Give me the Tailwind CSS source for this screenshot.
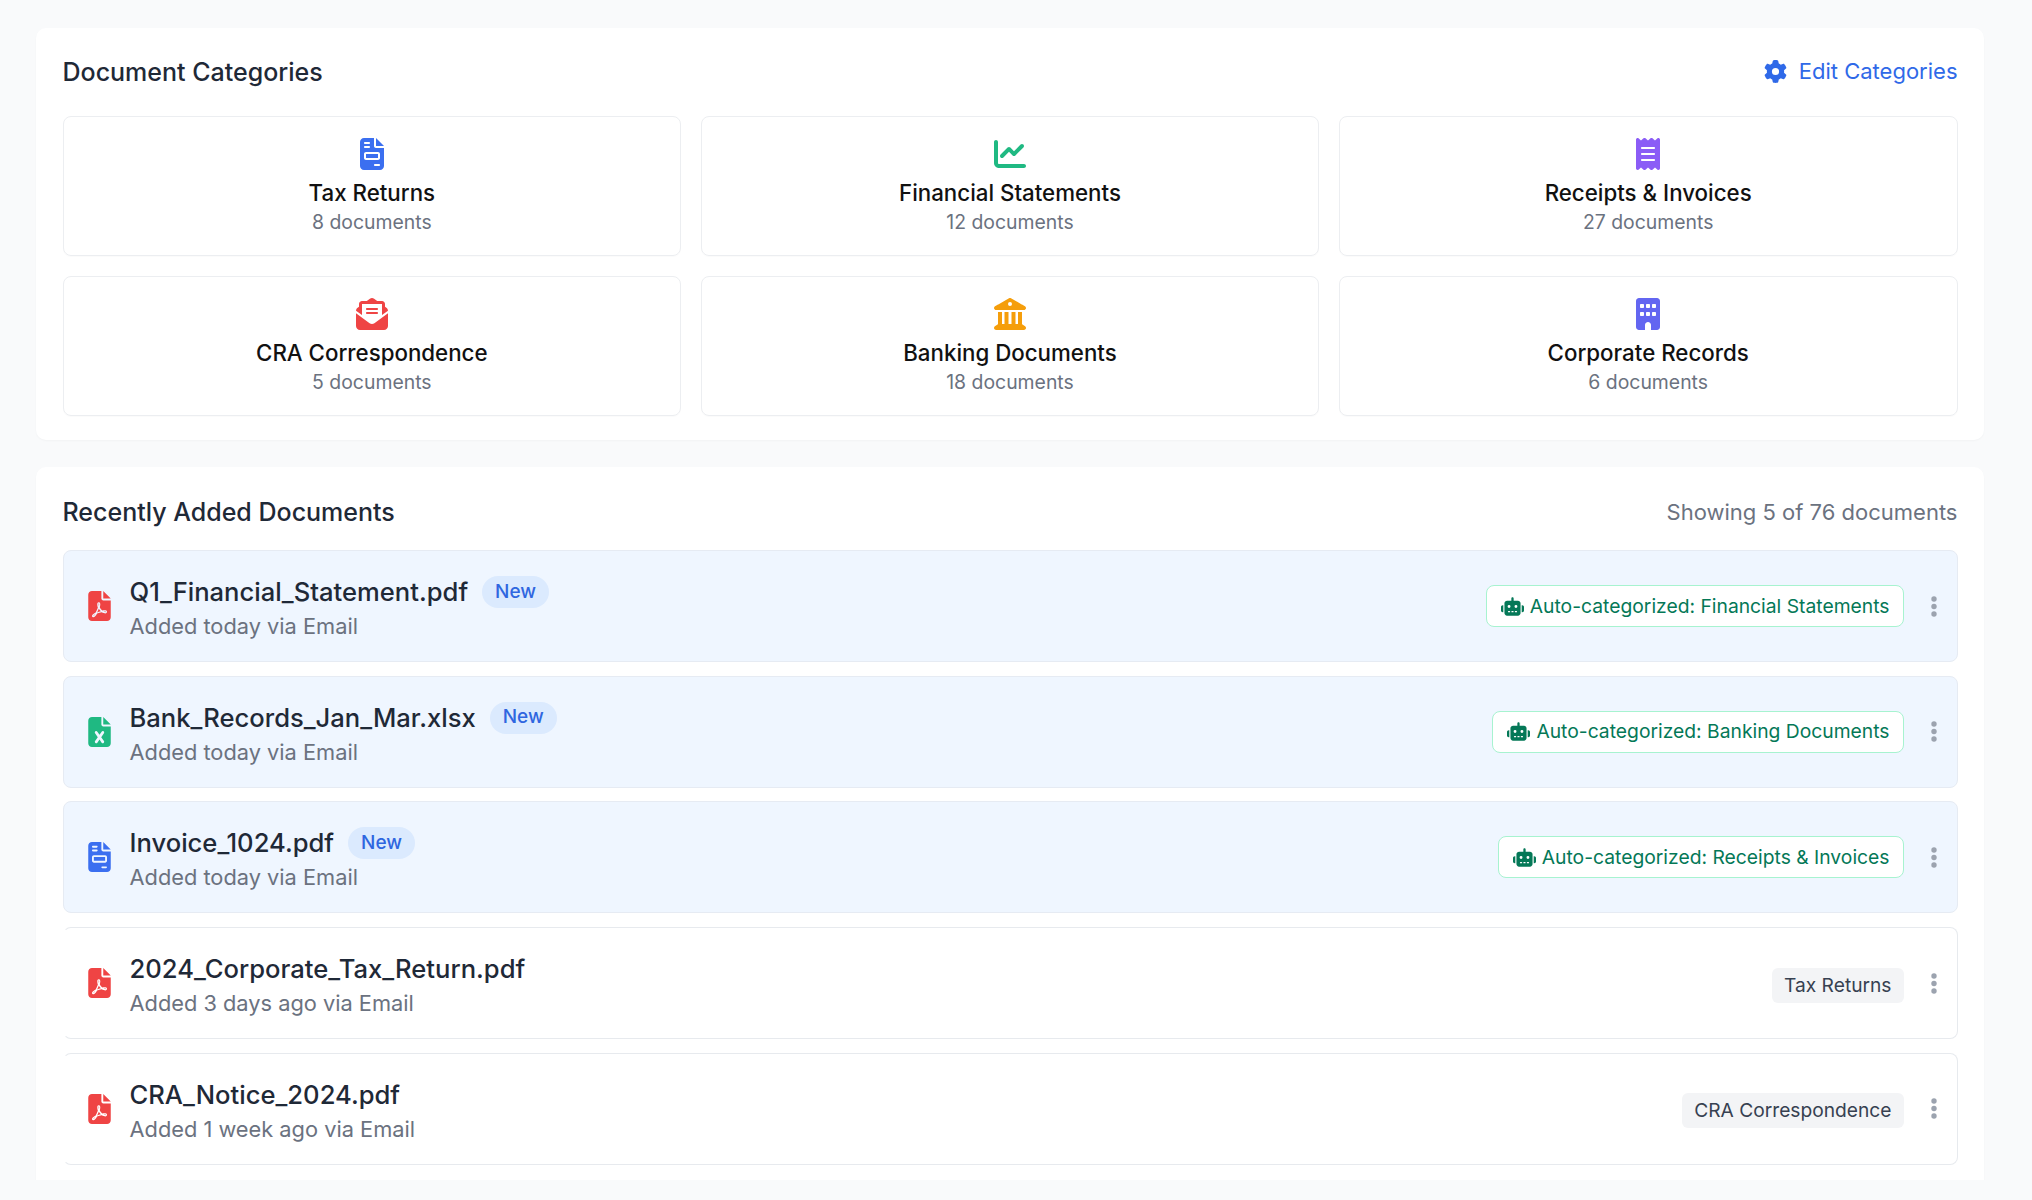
<!DOCTYPE html>
<html lang="en">
<head>
    <meta charset="UTF-8">
    <title>Documents</title>
    <script src="https://cdn.jsdelivr.net/npm/@tailwindcss/browser@4"></script>
</head>
<body class="bg-[#f9fafb] font-['Inter',sans-serif] antialiased">
    <!-- icon sprite -->
    <svg class="hidden" xmlns="http://www.w3.org/2000/svg">
        <symbol id="i-invoice" viewBox="0 0 384 512"><path d="M64 0C28.7 0 0 28.7 0 64V448c0 35.3 28.7 64 64 64H320c35.3 0 64-28.7 64-64V160H256c-17.7 0-32-14.3-32-32V0H64zM256 0V128H384L256 0zM80 64h64c8.8 0 16 7.2 16 16s-7.2 16-16 16H80c-8.8 0-16-7.2-16-16s7.2-16 16-16zm0 64h64c8.8 0 16 7.2 16 16s-7.2 16-16 16H80c-8.8 0-16-7.2-16-16s7.2-16 16-16zm16 96H288c17.7 0 32 14.3 32 32v64c0 17.7-14.3 32-32 32H96c-17.7 0-32-14.3-32-32V256c0-17.7 14.3-32 32-32zm0 32v64H288V256H96zM240 416h64c8.8 0 16 7.2 16 16s-7.2 16-16 16H240c-8.8 0-16-7.2-16-16s7.2-16 16-16z"/></symbol>
        <symbol id="i-chart" viewBox="0 0 512 512"><path d="M64 64c0-17.7-14.3-32-32-32S0 46.3 0 64V400c0 44.2 35.8 80 80 80H480c17.7 0 32-14.3 32-32s-14.3-32-32-32H80c-8.8 0-16-7.2-16-16V64zm406.6 86.6c12.5-12.5 12.5-32.8 0-45.3s-32.8-12.5-45.3 0L320 210.7l-57.4-57.4c-12.5-12.5-32.8-12.5-45.3 0l-112 112c-12.5 12.5-12.5 32.8 0 45.3s32.8 12.5 45.3 0L240 221.3l57.4 57.4c12.5 12.5 32.8 12.5 45.3 0l128-128z"/></symbol>
        <symbol id="i-receipt" viewBox="0 0 384 512"><path d="M14 2.2C22.5-1.7 32.5-.3 39.6 5.8L80 40.4 120.4 5.8c9-7.7 22.3-7.7 31.2 0L192 40.4 232.4 5.8c9-7.7 22.2-7.7 31.2 0L304 40.4 344.4 5.8c7.1-6.1 17.1-7.5 25.6-3.6s14 12.4 14 21.8V488c0 9.4-5.5 17.9-14 21.8s-18.5 2.5-25.6-3.6L304 471.6l-40.4 34.6c-9 7.7-22.3 7.7-31.2 0L192 471.6l-40.4 34.6c-9 7.7-22.2 7.7-31.2 0L80 471.6 39.6 506.2c-7.1 6.1-17.1 7.5-25.6 3.6S0 497.4 0 488V24C0 14.6 5.5 6.1 14 2.2zM96 144c-8.8 0-16 7.2-16 16s7.2 16 16 16H288c8.8 0 16-7.2 16-16s-7.2-16-16-16H96zM80 352c0 8.8 7.2 16 16 16H288c8.8 0 16-7.2 16-16s-7.2-16-16-16H96c-8.8 0-16 7.2-16 16zM96 240c-8.8 0-16 7.2-16 16s7.2 16 16 16H288c8.8 0 16-7.2 16-16s-7.2-16-16-16H96z"/></symbol>
        <symbol id="i-envelope" viewBox="0 0 512 512"><path d="M215.4 96H144 107.8 96v8.8V144v40.4 89L.2 202.5c1.6-18.1 10.9-34.9 25.7-45.8L48 140.3V96c0-26.5 21.5-48 48-48h76.6l49.9-36.9C232.2 3.9 243.9 0 256 0s23.8 3.9 33.5 11L339.4 48H416c26.5 0 48 21.5 48 48v44.3l22.1 16.4c14.8 10.9 24.1 27.7 25.7 45.8L416 273.4v-89V144 104.8 96H404.2 368 296.6 215.4zM0 448V242.1L217.6 403.3c11.1 8.2 24.6 12.7 38.4 12.7s27.3-4.4 38.4-12.7L512 242.1V448v0c0 35.3-28.7 64-64 64H64c-35.3 0-64-28.7-64-64v0zM176 160H336c8.8 0 16 7.2 16 16s-7.2 16-16 16H176c-8.8 0-16-7.2-16-16s7.2-16 16-16zm0 64H336c8.8 0 16 7.2 16 16s-7.2 16-16 16H176c-8.8 0-16-7.2-16-16s7.2-16 16-16z"/></symbol>
        <symbol id="i-landmark" viewBox="0 0 512 512"><path fill-rule="evenodd" d="M240.1 4.2c9.8-5.6 21.9-5.6 31.8 0l171.8 98.1L448 104l0 .9 47.9 27.4c12.6 7.2 18.8 22 15.1 36s-16.4 23.8-30.9 23.8H32c-14.5 0-27.2-9.8-30.9-23.8s2.5-28.8 15.1-36L64 104.9V104l4.4-1.6L240.1 4.2zM256 128a32 32 0 1 0 0-64 32 32 0 1 0 0 64zM64 224h64V416h40V224h64V416h48V224h64V416h40V224h64V420.3c.6 .3 1.2 .7 1.8 1.1l48 32c11.7 7.8 17 22.4 12.9 35.9S494.1 512 480 512H32c-14.1 0-26.5-9.2-30.6-22.7s1.1-28.1 12.9-35.9l48-32c.6-.4 1.2-.7 1.8-1.1V224z"/></symbol>
        <symbol id="i-building" viewBox="0 0 384 512"><path d="M48 0C21.5 0 0 21.5 0 48V464c0 26.5 21.5 48 48 48h96V432c0-26.5 21.5-48 48-48s48 21.5 48 48v80h96c26.5 0 48-21.5 48-48V48c0-26.5-21.5-48-48-48H48zM64 240c0-8.8 7.2-16 16-16h32c8.8 0 16 7.2 16 16v32c0 8.8-7.2 16-16 16H80c-8.8 0-16-7.2-16-16V240zm112-16h32c8.8 0 16 7.2 16 16v32c0 8.8-7.2 16-16 16H176c-8.8 0-16-7.2-16-16V240c0-8.8 7.2-16 16-16zm80 16c0-8.8 7.2-16 16-16h32c8.8 0 16 7.2 16 16v32c0 8.8-7.2 16-16 16H272c-8.8 0-16-7.2-16-16V240zM80 96h32c8.8 0 16 7.2 16 16v32c0 8.8-7.2 16-16 16H80c-8.8 0-16-7.2-16-16V112c0-8.8 7.2-16 16-16zm80 16c0-8.8 7.2-16 16-16h32c8.8 0 16 7.2 16 16v32c0 8.8-7.2 16-16 16H176c-8.8 0-16-7.2-16-16V112zM272 96h32c8.8 0 16 7.2 16 16v32c0 8.8-7.2 16-16 16H272c-8.8 0-16-7.2-16-16V112c0-8.8 7.2-16 16-16z"/></symbol>
        <symbol id="i-gear" viewBox="0 0 512 512"><path d="M495.9 166.6c3.2 8.7 .5 18.4-6.4 24.6l-43.3 39.4c1.1 8.3 1.7 16.8 1.7 25.4s-.6 17.1-1.7 25.4l43.3 39.4c6.9 6.2 9.6 15.9 6.4 24.6c-4.4 11.9-9.7 23.3-15.8 34.3l-4.7 8.1c-6.6 11-14 21.4-22.1 31.2c-5.9 7.2-15.7 9.6-24.5 6.8l-55.7-17.7c-13.4 10.3-28.2 18.9-44 25.4l-12.5 57.1c-2 9.1-9 16.3-18.2 17.8c-13.8 2.3-28 3.5-42.5 3.5s-28.7-1.2-42.5-3.5c-9.2-1.5-16.2-8.7-18.2-17.8l-12.5-57.1c-15.8-6.5-30.6-15.1-44-25.4L83.1 425.9c-8.8 2.8-18.6 .3-24.5-6.8c-8.1-9.8-15.5-20.2-22.1-31.2l-4.7-8.1c-6.1-11-11.4-22.4-15.8-34.3c-3.2-8.7-.5-18.4 6.4-24.6l43.3-39.4C64.6 273.1 64 264.6 64 256s.6-17.1 1.7-25.4L22.4 191.2c-6.9-6.2-9.6-15.9-6.4-24.6c4.4-11.9 9.7-23.3 15.8-34.3l4.7-8.1c6.6-11 14-21.4 22.1-31.2c5.9-7.2 15.7-9.6 24.5-6.8l55.7 17.7c13.4-10.3 28.2-18.9 44-25.4l12.5-57.1c2-9.1 9-16.3 18.2-17.8C227.3 1.2 241.5 0 256 0s28.7 1.2 42.5 3.5c9.2 1.5 16.2 8.7 18.2 17.8l12.5 57.1c15.8 6.5 30.6 15.1 44 25.4l55.7-17.7c8.8-2.8 18.6-.3 24.5 6.8c8.1 9.8 15.5 20.2 22.1 31.2l4.7 8.1c6.1 11 11.4 22.4 15.8 34.3zM256 336a80 80 0 1 0 0-160 80 80 0 1 0 0 160z"/></symbol>
        <symbol id="i-pdf" viewBox="0 0 384 512"><path fill-rule="evenodd" d="M64 0C28.7 0 0 28.7 0 64V448c0 35.3 28.7 64 64 64H320c35.3 0 64-28.7 64-64V160H256c-17.7 0-32-14.3-32-32V0H64zM256 0V128H384L256 0zM240 331.8c-20-12.2-33.3-29-42.7-53.8 4.5-18.5 11.6-46.6 6.2-64.2-4.7-29.4-42.4-26.5-47.8-6.8-5 18.3-.4 44.1 8.1 77-11.6 27.6-28.7 64.6-40.8 85.8-.1 0-.1.1-.2.1-27.1 13.9-73.6 44.5-54.5 68 5.6 6.9 16 10 21.5 10 17.9 0 35.7-18 61.1-61.8 25.8-8.5 54.1-19.1 79-23.2 21.7 11.8 47.1 19.5 64 19.5 29.2 0 31.2-32 19.7-43.4-13.9-13.6-54.3-9.7-73.6-7.2zM181.9 256.1c-5-16-4.9-46.9-2-46.9 8.4 0 7.6 36.9 2 46.9zM180.2 303.3c-7.7 20.2-17.3 43.3-28.4 62.7 18.3-7 39-17.2 62.9-21.9-12.7-9.6-24.9-23.4-34.5-40.8zM86.1 428.1c0 .8 13.2-5.4 34.9-40.2-6.7 6.3-29.1 24.5-34.9 40.2zM302.9 360.3c4.1-2.7-2.5-11.9-42.8-9 37.1 15.8 42.8 9 42.8 9z"/></symbol>
        <symbol id="i-excel" viewBox="0 0 384 512"><path d="M64 0C28.7 0 0 28.7 0 64V448c0 35.3 28.7 64 64 64H320c35.3 0 64-28.7 64-64V160H256c-17.7 0-32-14.3-32-32V0H64zM256 0V128H384L256 0zM155.7 250.2L192 302.1l36.3-51.9c7.6-10.9 22.6-13.5 33.4-5.9s13.5 22.6 5.9 33.4L221.3 344l46.4 66.2c7.6 10.9 5 25.8-5.9 33.4s-25.8 5-33.4-5.9L192 385.8l-36.3 51.9c-7.6 10.9-22.6 13.5-33.4 5.9s-13.5-22.6-5.9-33.4L162.7 344l-46.4-66.2c-7.6-10.9-5-25.8 5.9-33.4s25.8-5 33.4 5.9z"/></symbol>
        <symbol id="i-robot" viewBox="0 0 640 512"><path d="M320 0c17.7 0 32 14.3 32 32V96H472c39.8 0 72 32.2 72 72V440c0 39.8-32.2 72-72 72H168c-39.8 0-72-32.2-72-72V168c0-39.8 32.2-72 72-72H288V32c0-17.7 14.3-32 32-32zM208 384c-8.8 0-16 7.2-16 16s7.2 16 16 16h32c8.8 0 16-7.2 16-16s-7.2-16-16-16H208zm96 0c-8.8 0-16 7.2-16 16s7.2 16 16 16h32c8.8 0 16-7.2 16-16s-7.2-16-16-16H304zm96 0c-8.8 0-16 7.2-16 16s7.2 16 16 16h32c8.8 0 16-7.2 16-16s-7.2-16-16-16H400zM264 256a40 40 0 1 0 -80 0 40 40 0 1 0 80 0zm152 40a40 40 0 1 0 0-80 40 40 0 1 0 0 80zM48 224H64V416H48c-26.5 0-48-21.5-48-48V272c0-26.5 21.5-48 48-48zm544 0c26.5 0 48 21.5 48 48v96c0 26.5-21.5 48-48 48H576V224h16z"/></symbol>
        <symbol id="i-dots" viewBox="0 0 6 21"><circle cx="3" cy="3" r="2.7"/><circle cx="3" cy="10.5" r="2.7"/><circle cx="3" cy="18" r="2.7"/></symbol>
    </svg>

    <div class="h-[1180px] overflow-hidden pl-[36px] pr-[48px] pt-[28px]">
        <!-- categories -->
        <section class="bg-white rounded-[10px] shadow-[0_1px_2px_rgba(0,0,0,0.03)] px-[26.5px] pt-[26px] pb-[24px]">
            <div class="flex items-center justify-between h-[36px] mb-[26px]">
                <h2 class="text-[25px] font-medium text-[#1f2937] pt-[2px]">Document Categories</h2>
                <a class="flex items-center gap-[12px] text-[22px] font-normal text-[#2f69e8] pb-[2px]">
                    <svg class="w-[23px] h-[23px] fill-current"><use href="#i-gear"/></svg>
                    Edit Categories
                </a>
            </div>
            <div class="grid grid-cols-3 gap-x-[19.5px] gap-y-[20px]">
                <div class="flex flex-col items-center border border-[#eceef1] rounded-[8px] shadow-[0_1px_1px_rgba(0,0,0,0.02)] pt-[21px] pb-[20px]">
                    <svg class="w-[32px] h-[32px] mb-[9px] fill-current text-[#3b6ff0]"><use href="#i-invoice"/></svg>
                    <div class="text-[22.3px] leading-[28px] font-medium text-[#111111] mb-[2px]">Tax Returns</div>
                    <div class="text-[19.4px] leading-[26px] text-[#6b7280]">8 documents</div>
                </div>
                <div class="flex flex-col items-center border border-[#eceef1] rounded-[8px] shadow-[0_1px_1px_rgba(0,0,0,0.02)] pt-[21px] pb-[20px]">
                    <svg class="w-[32px] h-[32px] mb-[9px] fill-current text-[#1fb982]"><use href="#i-chart"/></svg>
                    <div class="text-[22.3px] leading-[28px] font-medium text-[#111111] mb-[2px]">Financial Statements</div>
                    <div class="text-[19.4px] leading-[26px] text-[#6b7280]">12 documents</div>
                </div>
                <div class="flex flex-col items-center border border-[#eceef1] rounded-[8px] shadow-[0_1px_1px_rgba(0,0,0,0.02)] pt-[21px] pb-[20px]">
                    <svg class="w-[32px] h-[32px] mb-[9px] fill-current text-[#8b5cf6]"><use href="#i-receipt"/></svg>
                    <div class="text-[22.3px] leading-[28px] font-medium text-[#111111] mb-[2px]">Receipts &amp; Invoices</div>
                    <div class="text-[19.4px] leading-[26px] text-[#6b7280]">27 documents</div>
                </div>
                <div class="flex flex-col items-center border border-[#eceef1] rounded-[8px] shadow-[0_1px_1px_rgba(0,0,0,0.02)] pt-[21px] pb-[20px]">
                    <svg class="w-[32px] h-[32px] mb-[9px] fill-current text-[#ef4444]"><use href="#i-envelope"/></svg>
                    <div class="text-[22.3px] leading-[28px] font-medium text-[#111111] mb-[2px]">CRA Correspondence</div>
                    <div class="text-[19.4px] leading-[26px] text-[#6b7280]">5 documents</div>
                </div>
                <div class="flex flex-col items-center border border-[#eceef1] rounded-[8px] shadow-[0_1px_1px_rgba(0,0,0,0.02)] pt-[21px] pb-[20px]">
                    <svg class="w-[32px] h-[32px] mb-[9px] fill-current text-[#f59e0b]"><use href="#i-landmark"/></svg>
                    <div class="text-[22.3px] leading-[28px] font-medium text-[#111111] mb-[2px]">Banking Documents</div>
                    <div class="text-[19.4px] leading-[26px] text-[#6b7280]">18 documents</div>
                </div>
                <div class="flex flex-col items-center border border-[#eceef1] rounded-[8px] shadow-[0_1px_1px_rgba(0,0,0,0.02)] pt-[21px] pb-[20px]">
                    <svg class="w-[32px] h-[32px] mb-[9px] fill-current text-[#6366f1]"><use href="#i-building"/></svg>
                    <div class="text-[22.3px] leading-[28px] font-medium text-[#111111] mb-[2px]">Corporate Records</div>
                    <div class="text-[19.4px] leading-[26px] text-[#6b7280]">6 documents</div>
                </div>
            </div>
        </section>

        <!-- recent documents -->
        <section class="bg-white rounded-[10px] shadow-[0_1px_2px_rgba(0,0,0,0.03)] mt-[27px] px-[26.5px] pt-[26px] pb-[26px]">
            <div class="flex items-center justify-between h-[38px] mb-[19px]">
                <h2 class="text-[25px] font-medium text-[#1f2937] pt-[2px]">Recently Added Documents</h2>
                <span class="text-[22px] text-[#6b7280]">Showing 5 of 76 documents</span>
            </div>
            <div class="flex flex-col gap-[13.7px]">
                <div class="flex items-center h-[112px] bg-[#eff6ff] border border-[#e6ebf3] rounded-[8px] pl-[24px] pr-[20px]">
                    <svg class="w-[23px] h-[30px] mr-[19px] shrink-0 fill-current text-[#ef4444]"><use href="#i-pdf"/></svg>
                    <div class="flex-1 pt-[4px]">
                        <div class="flex items-center h-[32px] mb-[4px]">
                            <span class="text-[25.6px] font-medium text-[#1f2937]">Q1_Financial_Statement.pdf</span>
                            <span class="ml-[14px] flex items-center h-[32px] px-[13px] rounded-full bg-[#dbeafe] text-[19px] font-medium text-[#2f66e0]">New</span>
                        </div>
                        <div class="text-[21.8px] leading-[28px] text-[#6b7280]">Added today via Email</div>
                    </div>
                    <span class="flex items-center gap-[6px] h-[42px] pl-[14px] pr-[13px] bg-white border border-[#a7f3d0] rounded-[8px] text-[19.3px] text-[#047857]">
                        <svg class="w-[23px] h-[19px] fill-current"><use href="#i-robot"/></svg>
                        Auto-categorized: Financial Statements
                    </span>
                    <svg class="w-[6px] h-[21px] ml-[27px] fill-current text-[#9ca3af]"><use href="#i-dots"/></svg>
                </div>
                <div class="flex items-center h-[112px] bg-[#eff6ff] border border-[#e6ebf3] rounded-[8px] pl-[24px] pr-[20px]">
                    <svg class="w-[23px] h-[30px] mr-[19px] shrink-0 fill-current text-[#1fb982]"><use href="#i-excel"/></svg>
                    <div class="flex-1 pt-[4px]">
                        <div class="flex items-center h-[32px] mb-[4px]">
                            <span class="text-[25.6px] font-medium text-[#1f2937]">Bank_Records_Jan_Mar.xlsx</span>
                            <span class="ml-[14px] flex items-center h-[32px] px-[13px] rounded-full bg-[#dbeafe] text-[19px] font-medium text-[#2f66e0]">New</span>
                        </div>
                        <div class="text-[21.8px] leading-[28px] text-[#6b7280]">Added today via Email</div>
                    </div>
                    <span class="flex items-center gap-[6px] h-[42px] pl-[14px] pr-[13px] bg-white border border-[#a7f3d0] rounded-[8px] text-[19.3px] text-[#047857]">
                        <svg class="w-[23px] h-[19px] fill-current"><use href="#i-robot"/></svg>
                        Auto-categorized: Banking Documents
                    </span>
                    <svg class="w-[6px] h-[21px] ml-[27px] fill-current text-[#9ca3af]"><use href="#i-dots"/></svg>
                </div>
                <div class="flex items-center h-[112px] bg-[#eff6ff] border border-[#e6ebf3] rounded-[8px] pl-[24px] pr-[20px]">
                    <svg class="w-[23px] h-[30px] mr-[19px] shrink-0 fill-current text-[#3b6ff0]"><use href="#i-invoice"/></svg>
                    <div class="flex-1 pt-[4px]">
                        <div class="flex items-center h-[32px] mb-[4px]">
                            <span class="text-[25.6px] font-medium text-[#1f2937]">Invoice_1024.pdf</span>
                            <span class="ml-[14px] flex items-center h-[32px] px-[13px] rounded-full bg-[#dbeafe] text-[19px] font-medium text-[#2f66e0]">New</span>
                        </div>
                        <div class="text-[21.8px] leading-[28px] text-[#6b7280]">Added today via Email</div>
                    </div>
                    <span class="flex items-center gap-[6px] h-[42px] pl-[14px] pr-[13px] bg-white border border-[#a7f3d0] rounded-[8px] text-[19.3px] text-[#047857]">
                        <svg class="w-[23px] h-[19px] fill-current"><use href="#i-robot"/></svg>
                        Auto-categorized: Receipts &amp; Invoices
                    </span>
                    <svg class="w-[6px] h-[21px] ml-[27px] fill-current text-[#9ca3af]"><use href="#i-dots"/></svg>
                </div>
                <div class="flex items-center h-[112px] bg-white border border-[#e7eaee] border-l-transparent rounded-[8px] pl-[24px] pr-[20px]">
                    <svg class="w-[23px] h-[30px] mr-[19px] shrink-0 fill-current text-[#ef4444]"><use href="#i-pdf"/></svg>
                    <div class="flex-1 pt-[4px]">
                        <div class="flex items-center h-[32px] mb-[4px]">
                            <span class="text-[25.6px] font-medium text-[#1f2937]">2024_Corporate_Tax_Return.pdf</span>
                        </div>
                        <div class="text-[21.8px] leading-[28px] text-[#6b7280]">Added 3 days ago via Email</div>
                    </div>
                    <span class="flex items-center h-[35px] mt-[4px] px-[12px] bg-[#f3f4f6] rounded-[6px] text-[19.2px] text-[#374151]">Tax Returns</span>
                    <svg class="w-[6px] h-[21px] ml-[27px] fill-current text-[#9ca3af]"><use href="#i-dots"/></svg>
                </div>
                <div class="flex items-center h-[112px] bg-white border border-[#e7eaee] border-l-transparent rounded-[8px] pl-[24px] pr-[20px]">
                    <svg class="w-[23px] h-[30px] mr-[19px] shrink-0 fill-current text-[#ef4444]"><use href="#i-pdf"/></svg>
                    <div class="flex-1 pt-[4px]">
                        <div class="flex items-center h-[32px] mb-[4px]">
                            <span class="text-[25.6px] font-medium text-[#1f2937]">CRA_Notice_2024.pdf</span>
                        </div>
                        <div class="text-[21.8px] leading-[28px] text-[#6b7280]">Added 1 week ago via Email</div>
                    </div>
                    <span class="flex items-center h-[35px] mt-[4px] px-[12px] bg-[#f3f4f6] rounded-[6px] text-[19.2px] text-[#374151]">CRA Correspondence</span>
                    <svg class="w-[6px] h-[21px] ml-[27px] fill-current text-[#9ca3af]"><use href="#i-dots"/></svg>
                </div>
            </div>
        </section>
    </div>
</body>
</html>
